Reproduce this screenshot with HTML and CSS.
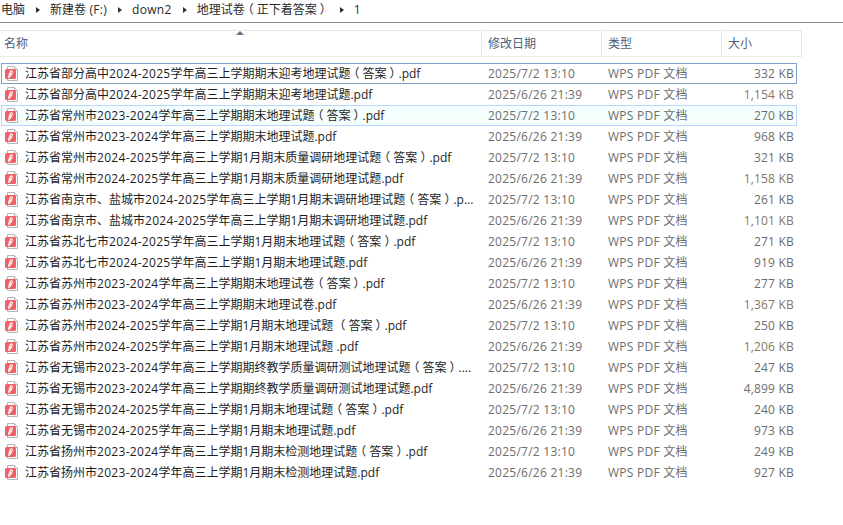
FILE: index.html
```html
<!DOCTYPE html>
<html lang="zh-CN">
<head>
<meta charset="utf-8">
<title>1</title>
<link rel="stylesheet" href="styles.css">
</head>
<body>
<svg class="defs" width="0" height="0" aria-hidden="true">
  <symbol id="pdf" viewBox="0 0 16 16">
    <path d="M2.5.5h7l3 3v11h-10z" fill="#fff" stroke="#b5b5b5"/>
    <path d="M9.500.5v3h3" fill="#eee" stroke="#b5b5b5"/>
    <rect x="0" y="3" width="11" height="10" rx="1.500" fill="#f25f66"/>
    <path d="M3.500 11.500c0-2 1-3 1.500-5 .2-1 .2-1.800 1.200-1.800 1.200 0 1.500 1.500.5 2.600-.7.7-1.900.7-2.700.4M3.500 11.500c1.300 0 1.700-.7 1.700-1.800 0-.9 1.100-1.100 2-.7" fill="none" stroke="#fff" stroke-width="1.100"/>
  </symbol>
</svg>
<nav class="crumbs">
  <span>电脑</span><i class="arrow"></i><span>新建卷<b class="n"> (F:)</b></span><i class="arrow"></i><span class="n">down2</span><i class="arrow"></i><span>地理试卷<b class="po">（</b>正下着答案<b class="pc">）</b></span><i class="arrow"></i><span>1</span>
</nav>
<div class="head">
  <div class="hcell hname">名称<i class="sort"></i></div>
  <div class="hcell">修改日期</div>
  <div class="hcell">类型</div>
  <div class="hcell">大小</div>
</div>
<div class="list">
  <div class="row sel"><svg class="ic"><use href="#pdf"/></svg><span class="name">江苏省部分高中<b class="n">2024-2025</b>学年高三上学期期末迎考地理试题<b class="po">（</b>答案<b class="pc">）</b>.pdf</span><span class="date">2025/7/2 13:10</span><span class="type">WPS PDF 文档</span><span class="size">332 KB</span></div>
  <div class="row"><svg class="ic"><use href="#pdf"/></svg><span class="name">江苏省部分高中<b class="n">2024-2025</b>学年高三上学期期末迎考地理试题.pdf</span><span class="date">2025/6/26 21:39</span><span class="type">WPS PDF 文档</span><span class="size warm">1,154 KB</span></div>
  <div class="row hover"><svg class="ic"><use href="#pdf"/></svg><span class="name">江苏省常州市<b class="n">2023-2024</b>学年高三上学期期末地理试题<b class="po">（</b>答案<b class="pc">）</b>.pdf</span><span class="date">2025/7/2 13:10</span><span class="type">WPS PDF 文档</span><span class="size">270 KB</span></div>
  <div class="row"><svg class="ic"><use href="#pdf"/></svg><span class="name">江苏省常州市<b class="n">2023-2024</b>学年高三上学期期末地理试题.pdf</span><span class="date">2025/6/26 21:39</span><span class="type">WPS PDF 文档</span><span class="size">968 KB</span></div>
  <div class="row"><svg class="ic"><use href="#pdf"/></svg><span class="name">江苏省常州市<b class="n">2024-2025</b>学年高三上学期1月期末质量调研地理试题<b class="po">（</b>答案<b class="pc">）</b>.pdf</span><span class="date">2025/7/2 13:10</span><span class="type">WPS PDF 文档</span><span class="size">321 KB</span></div>
  <div class="row"><svg class="ic"><use href="#pdf"/></svg><span class="name">江苏省常州市<b class="n">2024-2025</b>学年高三上学期1月期末质量调研地理试题.pdf</span><span class="date">2025/6/26 21:39</span><span class="type">WPS PDF 文档</span><span class="size warm">1,158 KB</span></div>
  <div class="row"><svg class="ic"><use href="#pdf"/></svg><span class="name">江苏省南京市、盐城市<b class="n">2024-2025</b>学年高三上学期1月期末调研地理试题<b class="po">（</b>答案<b class="pc">）</b>.p...</span><span class="date">2025/7/2 13:10</span><span class="type">WPS PDF 文档</span><span class="size">261 KB</span></div>
  <div class="row"><svg class="ic"><use href="#pdf"/></svg><span class="name">江苏省南京市、盐城市<b class="n">2024-2025</b>学年高三上学期1月期末调研地理试题.pdf</span><span class="date">2025/6/26 21:39</span><span class="type">WPS PDF 文档</span><span class="size warm">1,101 KB</span></div>
  <div class="row"><svg class="ic"><use href="#pdf"/></svg><span class="name">江苏省苏北七市<b class="n">2024-2025</b>学年高三上学期1月期末地理试题<b class="po">（</b>答案<b class="pc">）</b>.pdf</span><span class="date">2025/7/2 13:10</span><span class="type">WPS PDF 文档</span><span class="size">271 KB</span></div>
  <div class="row"><svg class="ic"><use href="#pdf"/></svg><span class="name">江苏省苏北七市<b class="n">2024-2025</b>学年高三上学期1月期末地理试题.pdf</span><span class="date">2025/6/26 21:39</span><span class="type">WPS PDF 文档</span><span class="size">919 KB</span></div>
  <div class="row"><svg class="ic"><use href="#pdf"/></svg><span class="name">江苏省苏州市<b class="n">2023-2024</b>学年高三上学期期末地理试卷<b class="po">（</b>答案<b class="pc">）</b>.pdf</span><span class="date">2025/7/2 13:10</span><span class="type">WPS PDF 文档</span><span class="size">277 KB</span></div>
  <div class="row"><svg class="ic"><use href="#pdf"/></svg><span class="name">江苏省苏州市<b class="n">2023-2024</b>学年高三上学期期末地理试卷.pdf</span><span class="date">2025/6/26 21:39</span><span class="type">WPS PDF 文档</span><span class="size warm">1,367 KB</span></div>
  <div class="row"><svg class="ic"><use href="#pdf"/></svg><span class="name">江苏省苏州市<b class="n">2024-2025</b>学年高三上学期1月期末地理试题 <b class="po">（</b>答案<b class="pc">）</b>.pdf</span><span class="date">2025/7/2 13:10</span><span class="type">WPS PDF 文档</span><span class="size">250 KB</span></div>
  <div class="row"><svg class="ic"><use href="#pdf"/></svg><span class="name">江苏省苏州市<b class="n">2024-2025</b>学年高三上学期1月期末地理试题 .pdf</span><span class="date">2025/6/26 21:39</span><span class="type">WPS PDF 文档</span><span class="size warm">1,206 KB</span></div>
  <div class="row"><svg class="ic"><use href="#pdf"/></svg><span class="name">江苏省无锡市<b class="n">2023-2024</b>学年高三上学期期终教学质量调研测试地理试题<b class="po">（</b>答案<b class="pc">）</b>....</span><span class="date">2025/7/2 13:10</span><span class="type">WPS PDF 文档</span><span class="size">247 KB</span></div>
  <div class="row"><svg class="ic"><use href="#pdf"/></svg><span class="name">江苏省无锡市<b class="n">2023-2024</b>学年高三上学期期终教学质量调研测试地理试题.pdf</span><span class="date">2025/6/26 21:39</span><span class="type">WPS PDF 文档</span><span class="size">4,899 KB</span></div>
  <div class="row"><svg class="ic"><use href="#pdf"/></svg><span class="name">江苏省无锡市<b class="n">2024-2025</b>学年高三上学期1月期末地理试题<b class="po">（</b>答案<b class="pc">）</b>.pdf</span><span class="date">2025/7/2 13:10</span><span class="type">WPS PDF 文档</span><span class="size">240 KB</span></div>
  <div class="row"><svg class="ic"><use href="#pdf"/></svg><span class="name">江苏省无锡市<b class="n">2024-2025</b>学年高三上学期1月期末地理试题.pdf</span><span class="date">2025/6/26 21:39</span><span class="type">WPS PDF 文档</span><span class="size">973 KB</span></div>
  <div class="row"><svg class="ic"><use href="#pdf"/></svg><span class="name">江苏省扬州市<b class="n">2023-2024</b>学年高三上学期1月期末检测地理试题<b class="po">（</b>答案<b class="pc">）</b>.pdf</span><span class="date">2025/7/2 13:10</span><span class="type">WPS PDF 文档</span><span class="size">249 KB</span></div>
  <div class="row"><svg class="ic"><use href="#pdf"/></svg><span class="name">江苏省扬州市<b class="n">2023-2024</b>学年高三上学期1月期末检测地理试题.pdf</span><span class="date">2025/6/26 21:39</span><span class="type">WPS PDF 文档</span><span class="size">927 KB</span></div>
</div>
</body>
</html>
```
FILE: styles.css
```css
* { box-sizing: border-box; }
html, body { margin: 0; background: #fff; }
body {
  width: 843px;
  height: 525px;
  overflow: hidden;
  font: 12px/16px "Open Sans", "Noto Sans CJK SC", sans-serif;
  color: #1e1e1e;
}
b { font-weight: 400; }
.n { letter-spacing: .3px; }
.po, .pc { font-feature-settings: "halt"; margin: 0 3px; }
.defs { display: block; height: 0; }
.crumbs {
  display: flex;
  align-items: center;
  height: 23px;
  padding: 0 0 2px 1px;
  border-bottom: 1px solid #8a8a8a;
  color: #2a2a2a;
  white-space: nowrap;
}
.arrow {
  flex: none;
  width: 0;
  height: 0;
  margin: 0 10px 0 11px;
  border-left: 4px solid #333;
  border-top: 3px solid transparent;
  border-bottom: 3px solid transparent;
}
.head {
  display: grid;
  grid-template-columns: 482px 120px 120px 80px;
  width: 802px;
  height: 27px;
  margin-top: 7px;
  border-top: 1px solid #e9e9e9;
  border-bottom: 1px solid #e9e9e9;
}
.hcell {
  position: relative;
  padding: 5px 0 0 6px;
  color: #4c607a;
  border-right: 1px solid #e9e9e9;
}
.hname { padding-left: 4px; }
.sort {
  position: absolute;
  left: 236px;
  top: 0;
  width: 0;
  height: 0;
  border-left: 4px solid transparent;
  border-right: 4px solid transparent;
  border-bottom: 4px solid #5f7488;
}
.list { margin-top: 6px; width: 798px; padding-left: 1px; }
.row {
  display: grid;
  grid-template-columns: 16px 457px 120px 120px 76px;
  align-items: center;
  width: 796px;
  height: 21px;
  padding: 0 2px 0 3px;
  border: 1px solid transparent;
}
.sel { border-color: #7da2ce; }
.hover { border-color: #b9d7fc; background: #f5fffe; }
.ic { width: 16px; height: 16px; }
.name { padding-left: 4px; white-space: nowrap; overflow: hidden; }
.date, .type { color: #6d6d6d; padding-left: 10px; letter-spacing: .25px; }
.size { color: #6d6d6d; text-align: right; letter-spacing: .2px; }
.size.warm { color: #857763; }
```
